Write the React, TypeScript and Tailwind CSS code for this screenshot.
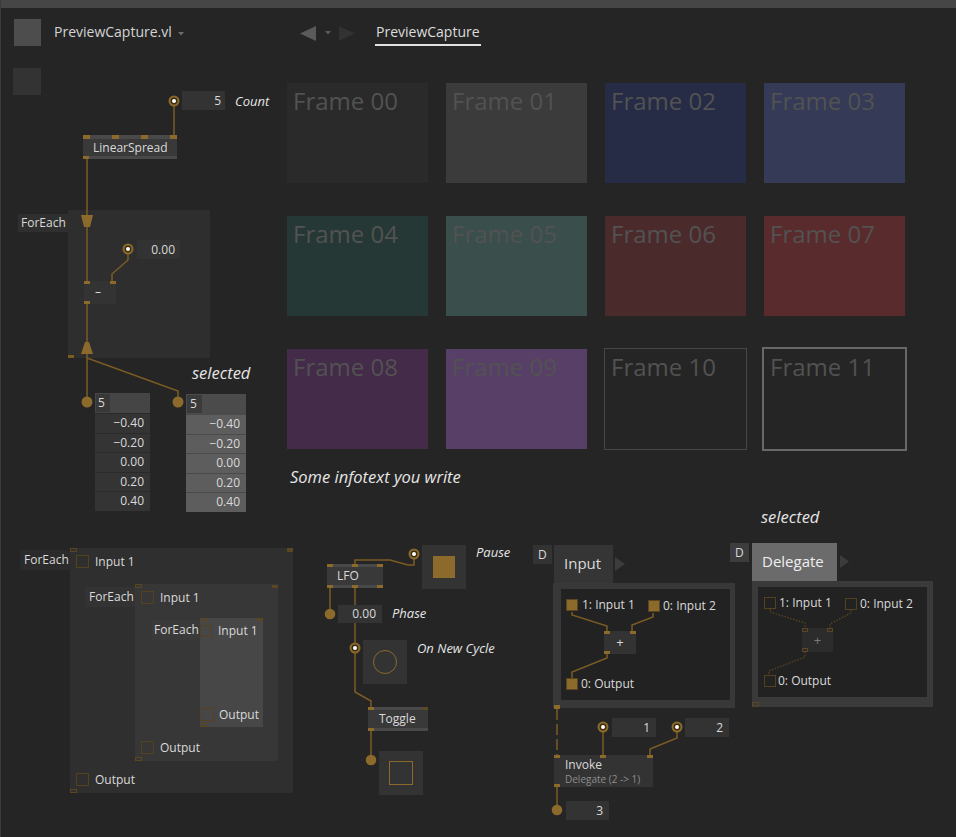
import React from "react";

const vals = ["−0.40", "−0.20", "0.00", "0.20", "0.40"];

const frames: { n: string; c: string }[] = [
  { n: "00", c: "bg-[#2a2a2a]" },
  { n: "01", c: "bg-[#3b3b3b]" },
  { n: "02", c: "bg-[#262c45]" },
  { n: "03", c: "bg-[#353a56]" },
  { n: "04", c: "bg-[#263835]" },
  { n: "05", c: "bg-[#3a4e4c]" },
  { n: "06", c: "bg-[#4b2a2c]" },
  { n: "07", c: "bg-[#5a2b2c]" },
  { n: "08", c: "bg-[#432b49]" },
  { n: "09", c: "bg-[#573f68]" },
  { n: "10", c: "outline outline-solid outline-1 outline-[#474747]" },
  { n: "11", c: "outline outline-solid outline-2 outline-[#686868]" },
];

function RingPin({ cx, cy }: { cx: number; cy: number }) {
  return (
    <g>
      <circle cx={cx} cy={cy} r={5.5} fill="#8b6a2b" />
      <circle cx={cx} cy={cy} r={3.4} fill="#3b2d12" />
      <circle cx={cx} cy={cy} r={2} fill="#ffffff" />
    </g>
  );
}

function HollowSq({ s = 13 }: { s?: number }) {
  return <div className={s === 13 ? "w-[13px] h-[13px] shrink-0 border-[1.5px] border-[#54421e]" : "w-[12px] h-[12px] shrink-0 border-[1.5px] border-[#54421e]"} />;
}

export default function App() {
  return (
    <div className="relative w-[956px] h-[837px] overflow-hidden bg-[#252525] font-['Open_Sans',sans-serif] text-[#dadada]">
      {/* window top band and left edge */}
      <div className="h-2 bg-[#464646]" />
      <div className="absolute left-0 top-0 w-px h-full bg-[#3c3c3c]" />

      {/* toolbar */}
      <div className="flex items-start h-[50px] pl-[14px]">
        <div className="mt-[11px] w-[27px] h-[27px] bg-[#4d4d4d]" />
        <span className="ml-[13px] mt-[14px] w-[118px] text-[14px] leading-[20px] text-[#d4d4d4] whitespace-nowrap">
          PreviewCapture.vl
        </span>
        <svg className="ml-[6px] mt-[24px]" width="6" height="4" viewBox="0 0 6 4">
          <polygon points="0,0 6,0 3,3.5" fill="#6a6a6a" />
        </svg>
        <svg className="ml-[116px] mt-[18px]" width="16" height="15" viewBox="0 0 16 15">
          <polygon points="16,0 16,15 0,7.5" fill="#5a5a5a" />
        </svg>
        <svg className="ml-[9px] mt-[23px]" width="6" height="4" viewBox="0 0 6 4">
          <polygon points="0,0 6,0 3,3.5" fill="#5a5a5a" />
        </svg>
        <svg className="ml-[8px] mt-[18px]" width="16" height="15" viewBox="0 0 16 15">
          <polygon points="0,0 0,15 16,7.5" fill="#323232" />
        </svg>
        <div className="ml-[20px] mt-[14px] flex flex-col">
          <span className="px-px text-[14px] leading-[20px] text-[#dcdcdc] whitespace-nowrap">PreviewCapture</span>
          <div className="mt-[2px] h-[2px] bg-[#e2e2e2]" />
        </div>
      </div>

      <div className="absolute left-[13px] top-[68px] w-[28px] h-[27px] bg-[#333333]" />

      {/* ---------- regions (background layer) ---------- */}
      <div className="absolute left-[68px] top-[210px] w-[142px] h-[148px] bg-[#2e2e2e]">
        <div className="absolute right-full top-[4px] w-[50px] h-[18px] bg-[#2f2f2f] pl-[3px] text-[12px] leading-[18px]">ForEach</div>
      </div>

      {/* nested ForEach (outer > middle > inner) */}
      <div className="absolute left-[70px] top-[548px] w-[223px] h-[245px] bg-[#2f2f2f] flex flex-col text-[12px] leading-[20px]">
        <div className="absolute right-full top-[2px] w-[50px] h-[20px] bg-[#2b2b2b] pl-[4px]">ForEach</div>
        <div className="absolute left-0 top-0 w-[7px] h-[4px] border border-[#5a4620]" />
        <div className="absolute right-0 top-0 w-[6px] h-[4px] bg-[#5a4620]" />
        <div className="absolute left-0 bottom-0 w-[7px] h-[4px] border border-[#5a4620]" />
        <div className="mt-[7px] ml-[6px] flex items-center gap-[6px] h-[13px]">
          <HollowSq />
          <span>Input 1</span>
        </div>

        <div className="relative mt-[16px] ml-[65px] w-[143px] h-[177px] bg-[#373737] flex flex-col">
          <div className="absolute right-full top-[3px] w-[50px] h-[20px] bg-[#333333] pl-[4px]">ForEach</div>
          <div className="absolute left-0 top-0 w-[7px] h-[4px] border border-[#5a4620]" />
          <div className="absolute right-0 top-px w-[6px] h-[3px] bg-[#5a4620]" />
          <div className="absolute left-0 bottom-0 w-[7px] h-[4px] border border-[#5a4620]" />
          <div className="mt-[7px] ml-[6px] flex items-center gap-[6px] h-[13px]">
            <HollowSq />
            <span>Input 1</span>
          </div>

          <div className="relative mt-[14px] ml-[65px] w-[63px] h-[109px] bg-[#474747] flex flex-col">
            <div className="absolute right-full top-[2px] w-[48px] h-[20px] bg-[#3a3a3a] pl-[2px]">ForEach</div>
            <div className="absolute left-0 top-0 w-[7px] h-[4px] border border-[#5a4620]" />
            <div className="absolute right-0 top-0 w-[6px] h-[3px] bg-[#5a4620]" />
            <div className="absolute left-0 bottom-0 w-[7px] h-[4px] border border-[#5a4620]" />
            <div className="mt-[7px] flex items-center gap-[6px] h-[12px]">
              <HollowSq s={12} />
              <span>Input 1</span>
            </div>
            <div className="mt-auto mb-[6px] ml-px flex items-center gap-[5px] h-[13px]">
              <HollowSq />
              <span>Output</span>
            </div>
          </div>

          <div className="mt-[14px] ml-[6px] flex items-center gap-[6px] h-[13px]">
            <HollowSq />
            <span>Output</span>
          </div>
        </div>

        <div className="mt-[12px] ml-[6px] flex items-center gap-[6px] h-[13px]">
          <HollowSq />
          <span>Output</span>
        </div>
      </div>

      {/* Input delegate region */}
      <div className="absolute left-[533px] top-[545px] flex items-start gap-[2px]">
        <div className="w-[19px] h-[19px] bg-[#333333] text-[12px] leading-[19px] pl-[5px]">D</div>
        <div className="flex flex-col">
          <div className="flex items-start">
            <div className="w-[59px] h-[38px] bg-[#353535] pl-[10px] pt-[8px] text-[15px] leading-[20px]">Input</div>
            <svg className="ml-[2px] mt-[12px]" width="10" height="14" viewBox="0 0 10 14">
              <polygon points="0,0 10,7 0,14" fill="#3c3c3c" />
            </svg>
          </div>
          <div className="-ml-px w-[182px] h-[125px] bg-[#383838] pl-[8px] pt-[6px] pr-[5px] pb-[8px]">
            <div className="w-full h-full bg-[#222222]" />
          </div>
        </div>
      </div>

      {/* Delegate region */}
      <div className="absolute left-[761px] top-[507px] text-[16.5px] leading-[20px] italic text-[#e4e4e4]">selected</div>
      <div className="absolute left-[730px] top-[543px] flex items-start gap-[3px]">
        <div className="w-[19px] h-[19px] bg-[#3d3d3d] text-[12px] leading-[19px] pl-[5px]">D</div>
        <div className="flex flex-col">
          <div className="flex items-start">
            <div className="w-[85px] h-[38px] bg-[#6b6b6b] pl-[10px] pt-[8px] text-[15px] leading-[20px] text-[#eeeeee]">Delegate</div>
            <svg className="ml-[3px] mt-[12px]" width="9" height="13" viewBox="0 0 9 13">
              <polygon points="0,0 9,6.5 0,13" fill="#3c3c3c" />
            </svg>
          </div>
          <div className="w-[181px] h-[126px] bg-[#3a3a3a] p-[6px] pb-[10px]">
            <div className="w-full h-full bg-[#222222]" />
          </div>
        </div>
      </div>

      {/* ---------- wires ---------- */}
      <svg className="absolute left-0 top-0" width="956" height="837" viewBox="0 0 956 837">
        <g fill="none" stroke="#7b5c24" strokeWidth="1.5">
          <path d="M174 106 V136" />
          <path d="M87 159 V282" />
          <path d="M128 254 V260 L112 274 V282" />
          <path d="M87 304 V402" />
          <path d="M87 358 L178 391 V402" />
          <path d="M414 559 V565 H408 L390 560 H355 V565" />
          <path d="M330 588 V614" />
          <path d="M355 588 V648" />
          <path d="M355 653 V692 L371 701 V708" />
          <path d="M371 731 V760" />
          <path d="M572 612 V615 L607 626 V631" />
          <path d="M653 613 V617 L632 625 V631" />
          <path d="M607 654 V658 L572 672 V678" />
          <path d="M557 709 V755" strokeDasharray="11 4" />
          <path d="M603 732 V755" />
          <path d="M677 732 V738 L650 749 V755" />
          <path d="M557 787 V810" />
        </g>
        <g fill="none" stroke="#5a4620" strokeWidth="1.3" strokeDasharray="1.5 1.5">
          <path d="M770 609 V612 L805 623 V628" />
          <path d="M851 610 V613 L830 624 V628" />
          <path d="M805 652 V657 L769 671 V675" />
        </g>
        <polygon points="81,215 93,215 90,227 84,227" fill="#8b6a2b" />
        <polygon points="85,342 89,342 93,354 81,354" fill="#8b6a2b" />
        <rect x="68" y="355" width="6" height="3" fill="#7b5c24" />
        <rect x="554" y="705" width="6" height="4" fill="#8b6a2b" />
        <rect x="752.5" y="702.5" width="6" height="3.5" fill="none" stroke="#5a4620" />
        <RingPin cx={174} cy={101} />
        <RingPin cx={128} cy={249} />
        <RingPin cx={414} cy={554} />
        <RingPin cx={355} cy={648} />
        <RingPin cx={603} cy={727} />
        <RingPin cx={677} cy={727} />
        <g fill="#8b6a2b">
          <circle cx={87} cy={402} r={5.5} />
          <circle cx={178} cy={402} r={5.5} />
          <circle cx={330} cy={614} r={5.3} />
          <circle cx={371} cy={760} r={5.3} />
          <circle cx={557} cy={810} r={5.3} />
        </g>
      </svg>

      {/* ---------- nodes ---------- */}
      {/* Count */}
      <div className="absolute left-[182px] top-[91px] flex items-center gap-[10px]">
        <div className="w-[43px] h-[19px] bg-[#333333] text-right pr-[4px] text-[12px] leading-[19px]">5</div>
        <div className="text-[13px] leading-[18px] italic text-[#e4e4e4]">Count</div>
      </div>

      {/* LinearSpread */}
      <div className="absolute left-[83px] top-[135px] w-[94px] h-[24px] flex flex-col bg-[#393939]">
        <div className="h-[4px] bg-[#494949] flex justify-between">
          <div className="w-[7px] h-[4px] bg-[#8b6a2b]" />
          <div className="w-[7px] h-[4px] bg-[#8b6a2b]" />
          <div className="w-[7px] h-[4px] bg-[#8b6a2b]" />
          <div className="w-[7px] h-[4px] bg-[#8b6a2b]" />
        </div>
        <div className="flex-1 pl-[10px] text-[12px] leading-[17px]">LinearSpread</div>
        <div className="h-[3px] bg-[#494949]">
          <div className="w-[6px] h-[3px] bg-[#8b6a2b]" />
        </div>
      </div>

      {/* 0.00 inside ForEach */}
      <div className="absolute left-[137px] top-[240px] w-[43px] h-[19px] bg-[#333333] text-right pr-[5px] text-[12px] leading-[19px]">0.00</div>

      {/* minus node */}
      <div className="absolute left-[84px] top-[281px] w-[32px] h-[23px] bg-[#333333]">
        <div className="absolute left-0 top-0 w-[6px] h-[3px] bg-[#8b6a2b]" />
        <div className="absolute right-0 top-0 w-[6px] h-[3px] bg-[#8b6a2b]" />
        <div className="absolute left-0 bottom-0 w-[6px] h-[3px] bg-[#8b6a2b]" />
        <div className="pl-[11px] text-[12px] leading-[22px]">–</div>
      </div>

      {/* selected label */}
      <div className="absolute left-[192px] top-[363px] text-[16.5px] leading-[20px] italic text-[#e4e4e4]">selected</div>

      {/* spread tables */}
      <div className="absolute left-[95px] top-[393px] flex items-start gap-[36px] text-[12px]">
        <div className="w-[55px] flex flex-col bg-[#2a2a2a]">
          <div className="h-[20px] bg-[#454545] p-px flex">
            <div className="w-[14px] bg-[#383838] pl-[2px] leading-[18px]">5</div>
          </div>
          {vals.map((v) => (
            <div key={v} className="mt-px h-[18.5px] bg-[#343434] text-right pr-[6px] leading-[18px]">{v}</div>
          ))}
        </div>
        <div className="mt-px w-[60px] flex flex-col bg-[#4a4a4a]">
          <div className="h-[20px] bg-[#4b4b4b] p-px flex">
            <div className="w-[15px] bg-[#3a3a3a] pl-[3px] leading-[18px]">5</div>
          </div>
          {vals.map((v) => (
            <div key={v} className="mt-px h-[18.5px] bg-[#5d5d5d] text-right pr-[6px] leading-[18px]">{v}</div>
          ))}
        </div>
      </div>

      {/* frames grid + info text */}
      <div className="absolute left-[287px] top-[83px] flex flex-col">
        <div className="grid grid-cols-[repeat(4,141px)] auto-rows-[100px] gap-x-[18px] gap-y-[33px]">
          {frames.map((f) => (
            <div key={f.n} className={`${f.c} pl-[6px] pt-[6px] text-[24px] leading-[24px] text-[#525252] whitespace-nowrap`}>
              Frame {f.n}
            </div>
          ))}
        </div>
        <div className="mt-[18px] ml-[3px] text-[16.5px] leading-[20px] italic text-[#e6e6e6]">Some infotext you write</div>
      </div>

      {/* LFO section */}
      <div className="absolute left-[422px] top-[545px] flex items-start gap-[10px]">
        <div className="w-[44px] h-[44px] bg-[#333333] flex items-center justify-center">
          <div className="w-[22px] h-[22px] bg-[#8b6a2b]" />
        </div>
        <div className="-mt-[2px] text-[13px] leading-[18px] italic text-[#e4e4e4]">Pause</div>
      </div>

      <div className="absolute left-[327px] top-[564px] w-[56px] h-[24px] flex flex-col bg-[#393939]">
        <div className="h-[3px] bg-[#494949] flex justify-between">
          <div className="w-[6px] h-[3px] bg-[#8b6a2b]" />
          <div className="w-[6px] h-[3px] bg-[#8b6a2b]" />
          <div className="w-[6px] h-[3px] bg-[#8b6a2b]" />
        </div>
        <div className="flex-1 pl-[10px] text-[12px] leading-[18px]">LFO</div>
        <div className="h-[3px] bg-[#494949] flex justify-between">
          <div className="w-[6px] h-[3px] bg-[#8b6a2b]" />
          <div className="w-[6px] h-[3px] bg-[#8b6a2b]" />
          <div className="w-[6px] h-[3px] bg-[#8b6a2b]" />
        </div>
      </div>

      <div className="absolute left-[338px] top-[605px] flex items-start gap-[10px]">
        <div className="w-[44px] h-[18px] bg-[#333333] text-right pr-[6px] text-[12px] leading-[18px]">0.00</div>
        <div className="-mt-px text-[13px] leading-[18px] italic text-[#e4e4e4]">Phase</div>
      </div>

      <div className="absolute left-[363px] top-[640px] flex items-start gap-[10px]">
        <div className="w-[44px] h-[44px] bg-[#333333] flex items-center justify-center">
          <div className="w-[24px] h-[24px] rounded-full border-[1.5px] border-[#8b6a2b]" />
        </div>
        <div className="-mt-px text-[13px] leading-[18px] italic text-[#e4e4e4]">On New Cycle</div>
      </div>

      <div className="absolute left-[368px] top-[707px] w-[60px] h-[24px] flex flex-col bg-[#393939]">
        <div className="h-[3px] bg-[#494949] flex justify-between">
          <div className="w-[6px] h-[3px] bg-[#8b6a2b]" />
          <div className="w-[6px] h-[3px] bg-[#5e4a22]" />
        </div>
        <div className="flex-1 pl-[11px] text-[12px] leading-[18px]">Toggle</div>
        <div className="h-[3px] bg-[#494949]">
          <div className="w-[6px] h-[3px] bg-[#8b6a2b]" />
        </div>
      </div>

      <div className="absolute left-[379px] top-[751px] w-[44px] h-[44px] bg-[#333333] flex items-center justify-center">
        <div className="w-[24px] h-[24px] border-[1.5px] border-[#8b6a2b]" />
      </div>

      {/* Input region contents */}
      <div className="absolute left-[566px] top-[595px] flex items-center gap-[4px] text-[12px] leading-[20px]">
        <div className="w-[12px] h-[12px] bg-[#8b6a2b] border border-[#5a4520]" />
        <span>1: Input 1</span>
      </div>
      <div className="absolute left-[648px] top-[596px] flex items-center gap-[3px] text-[12px] leading-[20px]">
        <div className="w-[12px] h-[12px] bg-[#8b6a2b] border border-[#5a4520]" />
        <span>0: Input 2</span>
      </div>
      <div className="absolute left-[604px] top-[631px] w-[32px] h-[23px] bg-[#333333]">
        <div className="absolute left-0 top-0 w-[6px] h-[3px] bg-[#8b6a2b]" />
        <div className="absolute right-0 top-0 w-[6px] h-[3px] bg-[#8b6a2b]" />
        <div className="absolute left-0 bottom-0 w-[6px] h-[3px] bg-[#8b6a2b]" />
        <div className="text-center text-[13px] leading-[23px]">+</div>
      </div>
      <div className="absolute left-[566px] top-[674px] flex items-center gap-[3px] text-[12px] leading-[20px]">
        <div className="w-[12px] h-[12px] bg-[#8b6a2b] border border-[#5a4520]" />
        <span>0: Output</span>
      </div>

      {/* Delegate region contents */}
      <div className="absolute left-[764px] top-[593px] flex items-center gap-[3px] text-[12px] leading-[20px]">
        <HollowSq s={12} />
        <span>1: Input 1</span>
      </div>
      <div className="absolute left-[845px] top-[594px] flex items-center gap-[3px] text-[12px] leading-[20px]">
        <HollowSq s={12} />
        <span>0: Input 2</span>
      </div>
      <div className="absolute left-[802px] top-[628px] w-[31px] h-[24px] bg-[#2c2c2c]">
        <div className="absolute left-0 top-0 w-[6px] h-[4px] border border-[#5a4620]" />
        <div className="absolute right-0 top-0 w-[6px] h-[4px] border border-[#5a4620]" />
        <div className="absolute left-0 bottom-0 w-[6px] h-[4px] border border-[#5a4620]" />
        <div className="text-center text-[13px] leading-[24px] text-[#7a7a7a]">+</div>
      </div>
      <div className="absolute left-[764px] top-[671px] flex items-center gap-[2px] text-[12px] leading-[20px]">
        <HollowSq s={12} />
        <span>0: Output</span>
      </div>

      {/* Invoke section */}
      <div className="absolute left-[612px] top-[718px] flex gap-[29px] text-[12px] leading-[19px]">
        <div className="w-[44px] h-[19px] bg-[#333333] text-right pr-[6px]">1</div>
        <div className="w-[44px] h-[19px] bg-[#333333] text-right pr-[6px]">2</div>
      </div>
      <div className="absolute left-[554px] top-[755px] w-[99px] h-[32px] bg-[#333333]">
        <div className="absolute left-0 top-0 w-[6px] h-[3px] bg-[#8b6a2b]" />
        <div className="absolute left-[46px] top-0 w-[6px] h-[3px] bg-[#8b6a2b]" />
        <div className="absolute right-0 top-0 w-[6px] h-[3px] bg-[#8b6a2b]" />
        <div className="absolute left-0 bottom-0 w-[6px] h-[3px] bg-[#8b6a2b]" />
        <div className="pl-[11px] pt-[2px] text-[12px] leading-[16px]">Invoke</div>
        <div className="pl-[11px] text-[10px] leading-[12px] text-[#8e8e8e] whitespace-nowrap">Delegate (2 -&gt; 1)</div>
      </div>
      <div className="absolute left-[566px] top-[801px] w-[43px] h-[19px] bg-[#333333] text-right pr-[6px] text-[12px] leading-[19px]">3</div>
    </div>
  );
}
